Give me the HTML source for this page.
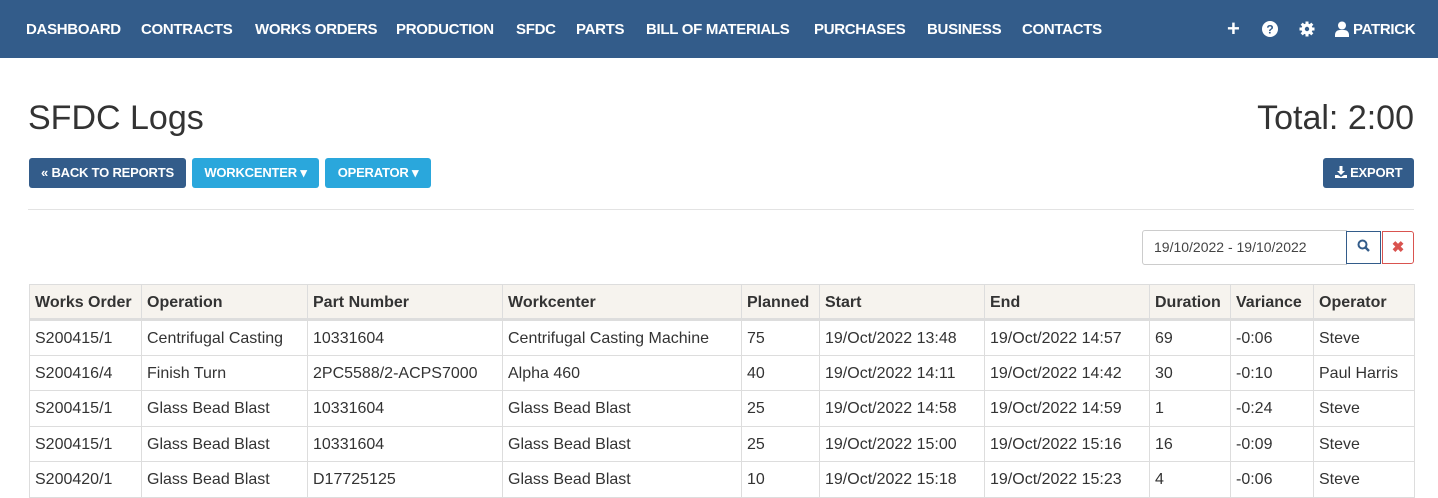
<!DOCTYPE html>
<html><head><style>
*{box-sizing:border-box;margin:0;padding:0}
body{width:1438px;height:498px;overflow:hidden;background:#fff;font-family:"Liberation Sans",sans-serif;color:#333}
.nav{position:absolute;left:0;top:0;width:1438px;height:58px;background:#335c8a}
.nav span{position:absolute;top:21px;color:#fff;font-weight:bold;font-size:15px;letter-spacing:-0.3px}
h1{position:absolute;left:28px;top:99px;font-weight:normal;font-size:34px;color:#333}
.total{position:absolute;right:24px;top:99px;font-size:34px;color:#333}
.btn{position:absolute;top:158px;height:30px;border-radius:3px;color:#fff;font-weight:bold;font-size:13px;line-height:30px;text-align:center;letter-spacing:-0.2px}
.dk{background:#335c8a}.lt{background:#2aa7dc}
.hr{position:absolute;left:28px;top:209px;width:1386px;height:1px;background:#e3e3e3}
.date{position:absolute;left:1142px;top:230px;width:205px;height:35px;border:1px solid #ccc;border-radius:3px 0 0 3px;font-size:14px;line-height:33px;padding-left:11px;color:#444}
.sb{position:absolute;top:231px;width:35px;height:33px;border:1px solid #335c8a;text-align:center;line-height:31px}
table{position:absolute;left:29px;top:284px;border-collapse:collapse;font-size:16px;color:#333;table-layout:fixed;width:1385px}
td,th{border:1px solid #ddd;height:35.5px;padding:2px 5px 0;text-align:left;white-space:nowrap;overflow:hidden}
th{background:#f6f3ee;font-weight:bold;height:35px;border-bottom:3px solid #ddd}
</style></head><body>
<div class="nav">
<span style="left:26px">DASHBOARD</span><span style="left:141px">CONTRACTS</span><span style="left:255px">WORKS ORDERS</span><span style="left:396px">PRODUCTION</span><span style="left:516px">SFDC</span><span style="left:576px">PARTS</span><span style="left:646px">BILL OF MATERIALS</span><span style="left:814px">PURCHASES</span><span style="left:927px">BUSINESS</span><span style="left:1022px">CONTACTS</span>
<span style="left:1227px;top:16px;font-size:22px">+</span>
<svg style="position:absolute;left:1262px;top:21px" width="16" height="16" viewBox="0 0 16 16"><circle cx="8" cy="8" r="8" fill="#fff"/><text x="8" y="12.5" font-size="12" font-weight="bold" text-anchor="middle" fill="#335c8a" font-family="Liberation Sans">?</text></svg>
<svg style="position:absolute;left:1299px;top:21px" width="16" height="16" viewBox="0 0 16 16"><g fill="#fff"><circle cx="8" cy="8" r="5.5"/><rect x="6.5" y="0.5" width="3" height="15"/><rect x="0.5" y="6.5" width="15" height="3"/><rect x="6.5" y="0.5" width="3" height="15" transform="rotate(45 8 8)"/><rect x="6.5" y="0.5" width="3" height="15" transform="rotate(-45 8 8)"/></g><circle cx="8" cy="8" r="2.2" fill="#335c8a"/></svg>
<svg style="position:absolute;left:1335px;top:21px" width="14" height="16" viewBox="0 0 14 16"><circle cx="7" cy="4.5" r="4" fill="#fff"/><path d="M0 16v-2c0-3 2-5 5-5h4c3 0 5 2 5 5v2z" fill="#fff"/></svg>
<span style="left:1353px">PATRICK</span>
</div>
<h1>SFDC Logs</h1>
<div class="total">Total: 2:00</div>
<div class="btn dk" style="left:29px;width:157px">« BACK TO REPORTS</div>
<div class="btn lt" style="left:192px;width:127px">WORKCENTER ▾</div>
<div class="btn lt" style="left:325px;width:106px">OPERATOR ▾</div>
<div class="btn dk" style="left:1323px;width:91px"><svg width="12" height="12" viewBox="0 0 12 12" style="vertical-align:-1px"><path d="M4.5 0h3v5h2.5L6 9 2 5h2.5z M0 9h3l3 2 3-2h3v3H0z" fill="#fff"/></svg> EXPORT</div>
<div class="hr"></div>
<div class="date">19/10/2022 - 19/10/2022</div>
<div class="sb" style="left:1346px"><svg width="13" height="13" viewBox="0 0 13 13"><circle cx="5.5" cy="5.5" r="4" fill="none" stroke="#335c8a" stroke-width="2"/><path d="M8.5 8.5l3.5 3.5" stroke="#335c8a" stroke-width="2.4"/></svg></div>
<div class="sb" style="left:1382px;width:32px;border-color:#d9534f;border-radius:0 3px 3px 0;color:#d9534f;font-weight:bold;font-size:15px">✖</div>
<table>
<colgroup><col style="width:112px"><col style="width:166px"><col style="width:195px"><col style="width:239px"><col style="width:78px"><col style="width:165px"><col style="width:165px"><col style="width:81px"><col style="width:83px"><col style="width:101px"></colgroup>
<tr><th>Works Order</th><th>Operation</th><th>Part Number</th><th>Workcenter</th><th>Planned</th><th>Start</th><th>End</th><th>Duration</th><th>Variance</th><th>Operator</th></tr>
<tr><td>S200415/1</td><td>Centrifugal Casting</td><td>10331604</td><td>Centrifugal Casting Machine</td><td>75</td><td>19/Oct/2022 13:48</td><td>19/Oct/2022 14:57</td><td>69</td><td>-0:06</td><td>Steve</td></tr>
<tr><td>S200416/4</td><td>Finish Turn</td><td>2PC5588/2-ACPS7000</td><td>Alpha 460</td><td>40</td><td>19/Oct/2022 14:11</td><td>19/Oct/2022 14:42</td><td>30</td><td>-0:10</td><td>Paul Harris</td></tr>
<tr><td>S200415/1</td><td>Glass Bead Blast</td><td>10331604</td><td>Glass Bead Blast</td><td>25</td><td>19/Oct/2022 14:58</td><td>19/Oct/2022 14:59</td><td>1</td><td>-0:24</td><td>Steve</td></tr>
<tr><td>S200415/1</td><td>Glass Bead Blast</td><td>10331604</td><td>Glass Bead Blast</td><td>25</td><td>19/Oct/2022 15:00</td><td>19/Oct/2022 15:16</td><td>16</td><td>-0:09</td><td>Steve</td></tr>
<tr><td>S200420/1</td><td>Glass Bead Blast</td><td>D17725125</td><td>Glass Bead Blast</td><td>10</td><td>19/Oct/2022 15:18</td><td>19/Oct/2022 15:23</td><td>4</td><td>-0:06</td><td>Steve</td></tr>
</table>
</body></html>
